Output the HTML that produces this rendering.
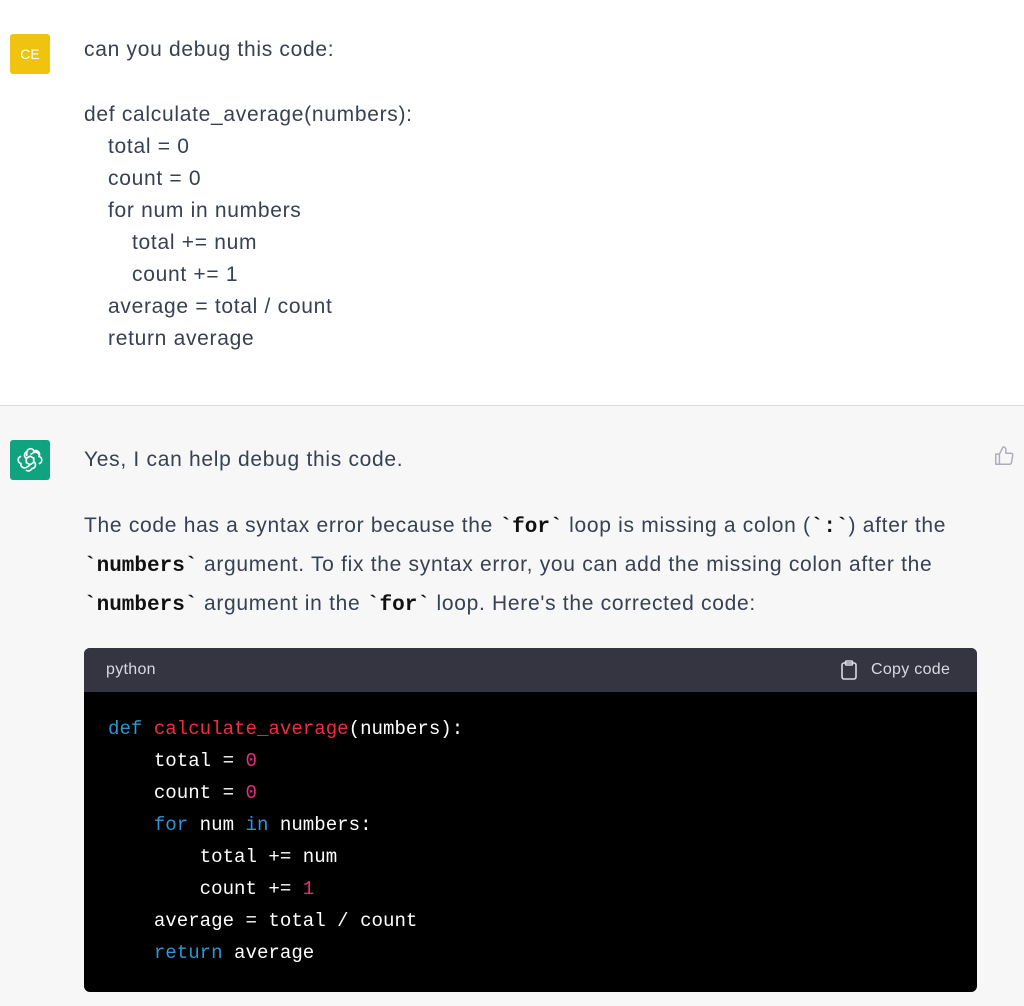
<!DOCTYPE html>
<html><head><style>
body{margin:0;width:1024px;height:1006px;overflow:hidden;font-family:"Liberation Sans",sans-serif;color:#374151;background:#f7f7f8;position:relative}
.user{position:absolute;left:0;top:0;width:1024px;height:405px;background:#fff;border-bottom:1px solid #d9d9e3}
.av{position:absolute;left:10px;width:40px;height:40px;border-radius:3px;color:#fff;font-size:14px;display:flex;align-items:center;justify-content:center}
.t{position:absolute;font-size:21px;letter-spacing:0.7px;line-height:32px;white-space:pre}
.t div{height:32px}
.code{position:absolute;left:84px;top:648px;width:893px;height:344px;background:#000;border-radius:6px;overflow:hidden}
.hd{height:44px;background:#343541;color:#d9d9e3;font-size:16px;letter-spacing:0.3px;position:relative}
.c{position:absolute;left:24px;font-family:"Liberation Mono",monospace;font-size:19.1px;line-height:32px;color:#fff;white-space:pre}
.k{color:#2e95d3}.f{color:#f22c3d}.n{color:#df3079}
code{font-family:"Liberation Mono",monospace;font-weight:bold;color:#111;font-size:21px;letter-spacing:0;line-height:0}
</style></head><body>
<div class="user"></div>
<div class="av" style="top:34px;background:#f0c30f">CE</div>
<div class="t" style="left:84px;top:34px">can you debug this code:</div>
<div class="t" style="left:84px;top:99px"><div>def calculate_average(numbers):</div><div style="padding-left:24px">total = 0</div><div style="padding-left:24px">count = 0</div><div style="padding-left:24px">for num in numbers</div><div style="padding-left:48px">total += num</div><div style="padding-left:48px">count += 1</div><div style="padding-left:24px">average = total / count</div><div style="padding-left:24px">return average</div></div>
<div class="av" style="top:440px;background:#10a37f"><svg width="28" height="28" viewBox="0 0 24 24" fill="none" stroke="#fff" stroke-width="1.4"><path d="M9.2 8.8V5.6a3.2 3.2 0 0 1 6.2-1.2 3.2 3.2 0 0 1 4.3 4.5"/><path d="M12.4 7.2l2.8-1.6a3.2 3.2 0 0 1 4.6 3.4 3.2 3.2 0 0 1-.2 6.2"/><path d="M15.2 9.6v3.8a3.2 3.2 0 0 1-1.6 5.9 3.2 3.2 0 0 1-5.1 1.3"/><path d="M11.6 16.8l-2.8 1.6a3.2 3.2 0 0 1-4.6-3.4 3.2 3.2 0 0 1 .2-6.2"/><path d="M8.8 14.4v-3.8a3.2 3.2 0 0 1 1.6-5.9"/><path d="M8.8 10.6l3.3-1.9 3.1 1.8v3.6l-3.2 1.9-3.2-1.8z"/></svg></div>
<div class="t" style="left:84px;top:444px">Yes, I can help debug this code.</div>
<div class="t" style="left:84px;top:506px;line-height:39px">The code has a syntax error because the <code>`for`</code> loop is missing a colon (<code>`:`</code>) after the
<code>`numbers`</code> argument. To fix the syntax error, you can add the missing colon after the
<code>`numbers`</code> argument in the <code>`for`</code> loop. Here's the corrected code:</div>
<svg style="position:absolute;left:993px;top:445px" width="22" height="22" viewBox="0 0 24 24" fill="none" stroke="#acacbe" stroke-width="1.6" stroke-linejoin="round"><path d="M7 10v11H3V10h4zM7 10l4-8a3 3 0 0 1 3 3v4h5.5a2 2 0 0 1 2 2.3l-1.4 8A2 2 0 0 1 18 21H7"/></svg>
<div class="code"><div class="hd"><span style="position:absolute;left:22px;top:13px">python</span>
<svg style="position:absolute;left:756px;top:12px" width="18" height="20" viewBox="0 0 18 20" fill="none" stroke="#d9d9e3" stroke-width="1.6"><rect x="2" y="3" width="14" height="16" rx="2"/><rect x="5.5" y="1" width="7" height="4" rx="1"/></svg>
<span style="position:absolute;left:787px;top:13px">Copy code</span></div>
<div class="c" style="top:65px"><span class="k">def</span> <span class="f">calculate_average</span>(numbers):
    total = <span class="n">0</span>
    count = <span class="n">0</span>
    <span class="k">for</span> num <span class="k">in</span> numbers:
        total += num
        count += <span class="n">1</span>
    average = total / count
    <span class="k">return</span> average</div></div>
</body></html>
